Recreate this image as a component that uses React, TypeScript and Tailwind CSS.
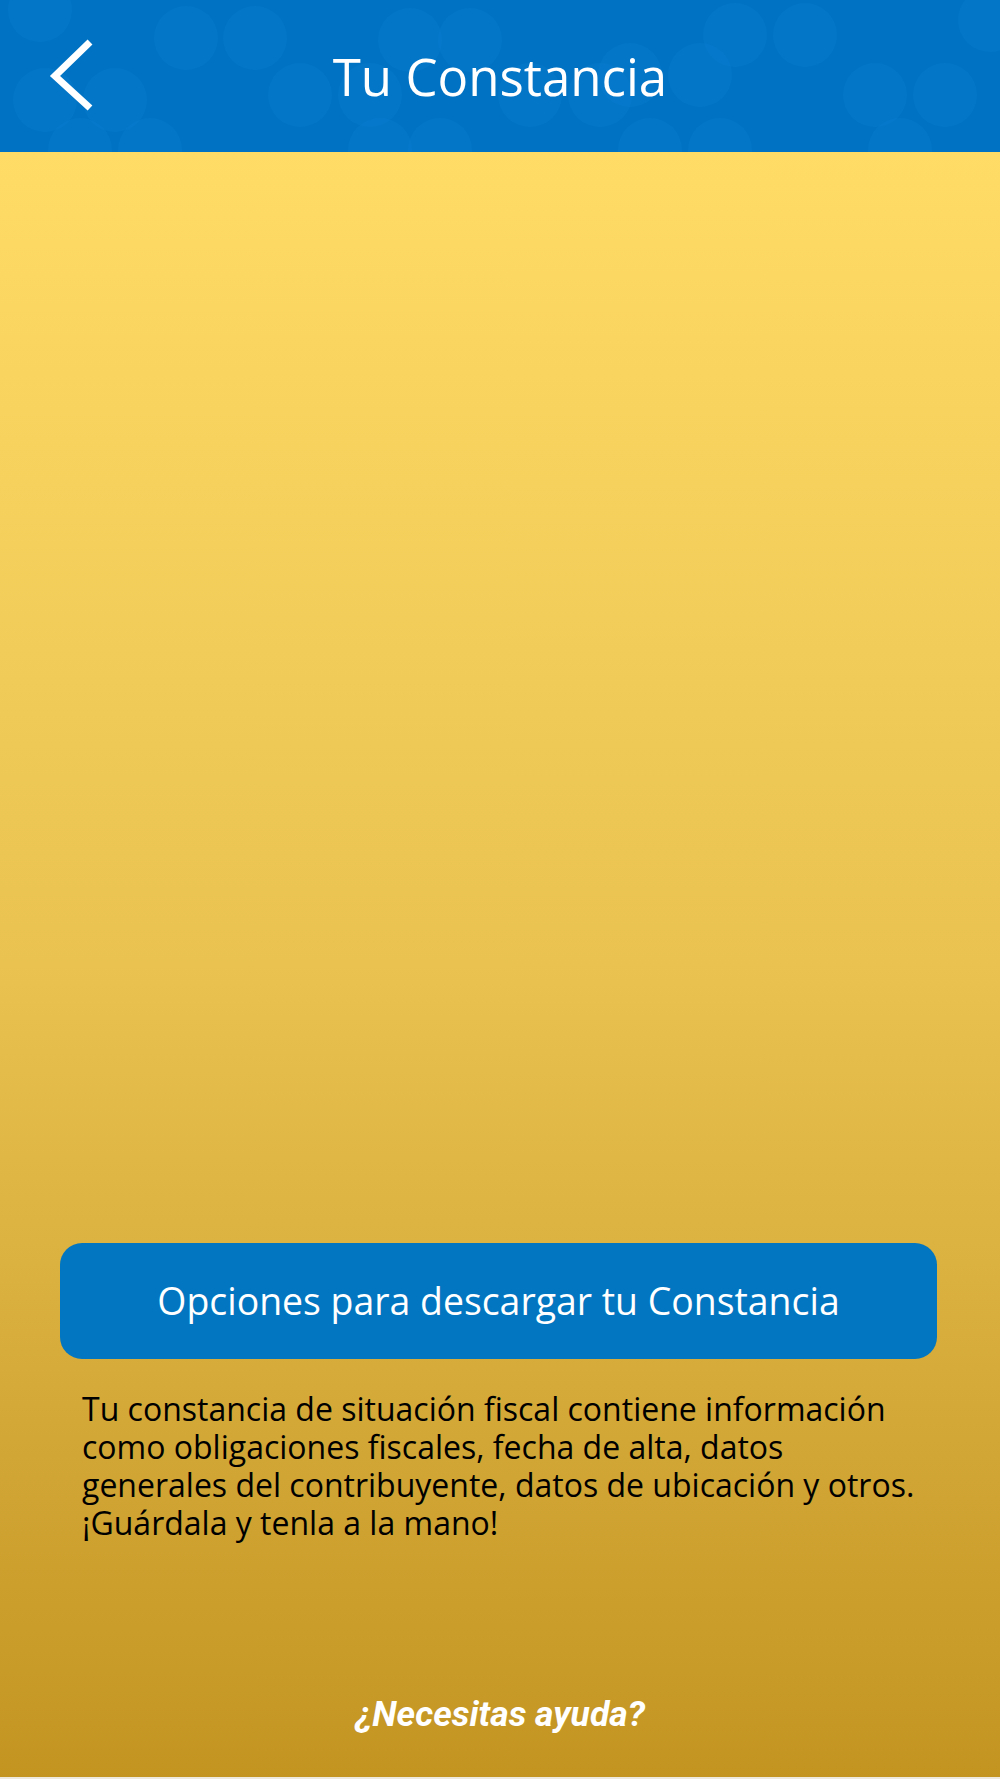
import React from "react";

const circles: [number, number][] = [
  [186, 38], [255, 38], [410, 40], [470, 40], [735, 35], [805, 35],
  [45, 100], [115, 100], [300, 95], [370, 95], [530, 95], [600, 95], [875, 95], [945, 95],
  [630, 75], [700, 75],
  [40, 10], [990, 20],
  [80, 150], [150, 150], [380, 150], [440, 150], [650, 150], [720, 150], [900, 150],
];

function HeaderBg() {
  return (
    <svg className="absolute inset-0 h-full w-full" viewBox="0 0 1000 152" preserveAspectRatio="none">
      <rect width="1000" height="152" fill="#0072c3" />
      {circles.map(([cx, cy], i) => (
        <circle key={i} cx={cx} cy={cy} r={32} fill="#0a7ccf" opacity={0.4} />
      ))}
    </svg>
  );
}

export default function App() {
  return (
    <div
      className="flex min-h-[1779px] w-full flex-col"
      style={{ fontFamily: '"Open Sans", "Noto Sans", sans-serif' }}
    >
      <header className="relative flex h-[152px] shrink-0 items-center justify-center overflow-hidden">
        <HeaderBg />
        <button className="absolute left-[44px] top-[34px] flex h-[82px] w-[58px] items-center justify-center">
          <svg width="58" height="82" viewBox="0 0 58 82">
            <polyline points="46,8 11,42 46,74" fill="none" stroke="#ffffff" strokeWidth="7" strokeLinejoin="miter" />
          </svg>
        </button>
        <h1 className="relative text-[51px] font-normal leading-none text-white">Tu Constancia</h1>
      </header>
      <main className="flex flex-1 flex-col bg-gradient-to-b from-[#ffdc66] via-[#e9c24f] to-[#c39420]">
        <div className="flex-1" />
        <div className="px-[60px] pr-[63px]">
          <button className="flex h-[116px] w-full items-center justify-center rounded-[22px] bg-[#0276c1] text-[37.4px] text-white">
            Opciones para descargar tu Constancia
          </button>
        </div>
        <p className="mt-[31px] pl-[82px] pr-[75px] text-[32px] leading-[38px] text-black">
          Tu constancia de situación fiscal contiene información como obligaciones fiscales, fecha de alta, datos generales del contribuyente, datos de ubicación y otros. ¡Guárdala y tenla a la mano!
        </p>
        <div
          className="mt-[152px] mb-[43px] h-[40px] text-center text-[35.5px] font-bold italic leading-[40px] text-white"
          style={{ fontFamily: "Roboto, sans-serif" }}
        >
          ¿Necesitas ayuda?
        </div>
        <div className="h-[2px] bg-[#eee9de]" />
      </main>
    </div>
  );
}
